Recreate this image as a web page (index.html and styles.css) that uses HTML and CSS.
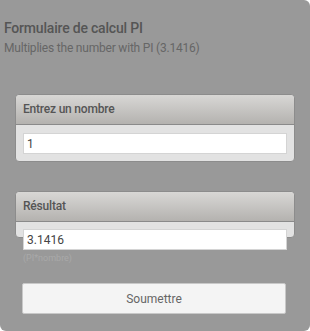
FILE: index.html
```html
<!DOCTYPE html>
<html lang="fr">
<head>
    <meta charset="UTF-8">
    <meta name="viewport" content="width=device-width, initial-scale=1.0">
    <title>Formulaire de calcul PI</title>
    <link rel="stylesheet" href="styles.css">
</head>
<body>
    <div class="page">
        <h1 class="title">Formulaire de calcul PI</h1>
        <p class="subtitle">Multiplies the number with PI (3.1416)</p>

        <div class="panel">
            <div class="panel-head">Entrez un nombre</div>
            <div class="panel-body">
                <input class="field" type="text" value="1">
            </div>
        </div>

        <div class="panel result">
            <div class="panel-head">Résultat</div>
            <div class="panel-body">
                <input class="field" type="text" value="3.1416" readonly>
                <div class="hint">(PI*nombre)</div>
            </div>
        </div>

        <button class="submit">Soumettre</button>
    </div>
</body>
</html>
```

FILE: styles.css
```css
body {
    margin: 0;
    background: #fff;
    font-family: Roboto, "Liberation Sans", sans-serif;
}

.page {
    height: 331px;
    box-sizing: border-box;
    padding: 19px 4px 0;
    background: #999;
    border-radius: 0 6px 6px 6px;
}

.title {
    margin: 0;
    font-size: 14px;
    line-height: 18px;
    font-weight: 500;
    color: #555;
    letter-spacing: -0.2px;
}

.subtitle {
    margin: 3px 0 0;
    font-size: 12px;
    line-height: 16px;
    color: #666;
    letter-spacing: -0.2px;
}

.panel {
    margin: 38px 11px 0;
    border: 1px solid #8c8c8c;
    border-radius: 4px;
    background: #e2e2e2;
}

.panel-head {
    height: 29px;
    line-height: 29px;
    padding: 0 7px;
    font-size: 12px;
    font-weight: 500;
    color: #555;
    letter-spacing: -0.2px;
    background: linear-gradient(#d8d7d5, #b4b2af);
    border-bottom: 1px solid #8a8a8a;
    border-radius: 4px 4px 0 0;
}

.panel-body {
    padding: 8px 7px 7px;
}

.field {
    display: block;
    width: 100%;
    height: 21px;
    box-sizing: border-box;
    margin: 0;
    padding: 0 3px;
    border: 1px solid #d4d4d4;
    background: #fff;
    font-family: inherit;
    font-size: 12px;
    color: #444;
}

.result {
    margin-top: 29px;
}

.result .panel-body {
    height: 15px;
    box-sizing: border-box;
    padding: 7px 7px 0;
}

.hint {
    position: relative;
    margin-top: 3px;
    font-size: 9px;
    line-height: 11px;
    color: #a9a9a9;
}

.submit {
    display: block;
    width: 264px;
    height: 31px;
    margin: 45px 0 0 18px;
    border: 1px solid #c8c8c8;
    border-radius: 2px;
    background: #f4f4f4;
    font-family: inherit;
    font-size: 12px;
    color: #666;
}
```
